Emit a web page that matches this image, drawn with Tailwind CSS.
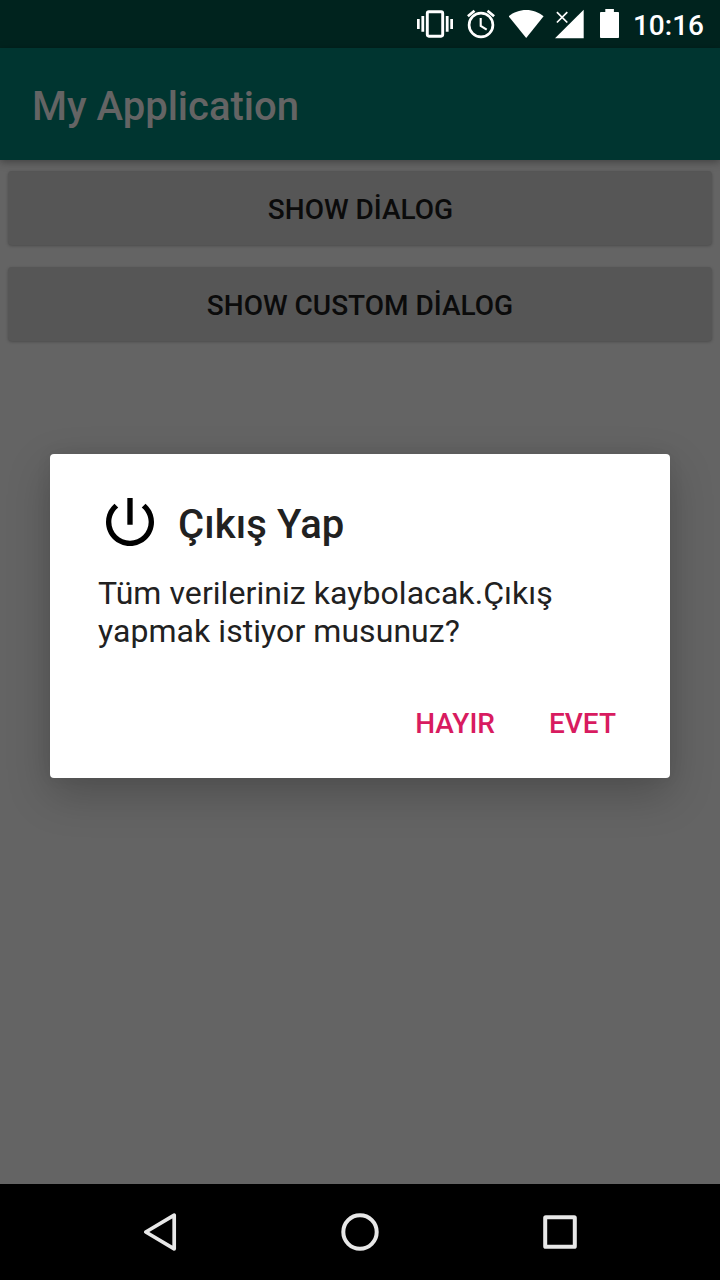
<!DOCTYPE html>
<html lang="tr">
<head>
<meta charset="utf-8">
<title>My Application</title>
<script src="https://cdn.jsdelivr.net/npm/@tailwindcss/browser@4"></script>
</head>
<body class="bg-[#646464]">
<div class="relative flex h-[1280px] w-[720px] flex-col overflow-hidden bg-[#646464] font-['Roboto',sans-serif]">
  <header class="flex h-12 shrink-0 items-start justify-end bg-[#00231e] pr-4 text-white">
    <svg class="mr-3.5 h-12 w-9" viewBox="417 0 36 48" fill="currentColor"><rect x="427.3" y="11.8" width="15.4" height="24.4" rx="1.6" fill="none" stroke="currentColor" stroke-width="2.9"/><path d="M417 19h2.7v10H417zM421.4 16h2.8v15.7h-2.8zM445.8 16h2.8v15.7h-2.8zM450.3 19h2.7v10h-2.7z"/></svg>
    <svg class="mr-3.5 h-12 w-7" viewBox="467 0 28 48" fill="none" stroke="currentColor" stroke-width="2.7"><circle cx="481" cy="25" r="11.9"/><path d="M467.9 16.3l6.6-5.5M494.1 16.3l-6.6-5.5"/><path d="M480.7 18v8l6 3.7" stroke-width="2.1"/></svg>
    <svg class="mr-[11px] h-12 w-[35px]" viewBox="509 0 35 48" fill="currentColor"><path d="M526.2 38L508.7 16.3C513 12.5 519.5 10 526.2 10s13.1 2.5 17.400 6.300z"/></svg>
    <svg class="mr-4 h-12 w-[29px]" viewBox="555 0 29 48" fill="currentColor"><path d="M555 38.300L583.700 9.700v28.600z"/><path d="M556.900 12.100l10.400 10.400M567.300 12.100l-10.400 10.400" stroke="currentColor" stroke-width="1.700"/></svg>
    <svg class="mr-3.5 h-12 w-[19px]" viewBox="600 0 19 48" fill="currentColor"><path d="M601 12h4.300V9h8.600v3h4.300q.8 0 .8.800v24.400q0 .8-.8.800H601q-1 0-1-.8V12.800q0-.8 1-.8z"/></svg>
    <span class="pt-[9px] text-[28px] leading-[33px] font-medium">10:16</span>
  </header>
  <div class="z-10 h-28 shrink-0 bg-[#003530] pt-[35px] pl-8 shadow-[0_2px_8px_rgba(0,0,0,0.35)]">
    <h1 class="text-[40px] leading-[47px] font-medium text-[#646464]">My Application</h1>
  </div>
  <main class="flex grow flex-col gap-[22px] px-2 pt-[11px]">
    <button class="h-[74px] shrink-0 rounded-[4px] bg-[#565656] pt-[2px] pl-px text-[28px] leading-[33px] font-medium text-[#0b0b0b] shadow-[0_1px_3px_rgba(0,0,0,0.25)]">SHOW DİALOG</button>
    <button class="h-[74px] shrink-0 rounded-[4px] bg-[#565656] pt-[2px] text-[28px] leading-[33px] font-medium text-[#0b0b0b] shadow-[0_1px_3px_rgba(0,0,0,0.25)]">SHOW CUSTOM DİALOG</button>
  </main>
  <nav class="flex h-24 shrink-0 items-center justify-center gap-[152px] bg-black">
    <svg class="h-12 w-12" viewBox="0 0 48 48" fill="none" stroke="#e8e8e8" stroke-width="3.7" stroke-linejoin="round"><path d="M38.200 7.200v33.600L9.800 24z"/></svg>
    <svg class="h-12 w-12" viewBox="0 0 48 48" fill="none" stroke="#e8e8e8" stroke-width="4"><circle cx="24" cy="24" r="16.700"/></svg>
    <svg class="h-12 w-12" viewBox="0 0 48 48" fill="none" stroke="#e8e8e8" stroke-width="4" stroke-linejoin="round"><rect x="9.200" y="9.200" width="29.600" height="29.600" rx=".6"/></svg>
  </nav>
  <section role="dialog" class="absolute top-[454px] left-[50px] z-20 flex h-[324px] w-[620px] flex-col rounded-[4px] bg-white px-12 text-[#212121] shadow-[0_16px_44px_rgba(0,0,0,0.22),0_0_16px_rgba(0,0,0,0.06)]">
    <div class="flex gap-4 pt-9">
      <svg class="h-16 w-16" viewBox="0 0 24 24" fill="#000"><path d="M13 3h-2v10h2V3zm4.830 2.170l-1.420 1.420C17.990 7.860 19 9.810 19 12c0 3.870-3.130 7-7 7s-7-3.130-7-7c0-2.190 1.010-4.140 2.580-5.420L6.170 5.170C4.230 6.820 3 9.260 3 12c0 4.970 4.030 9 9 9s9-4.030 9-9c0-2.740-1.230-5.180-3.170-6.830z"/></svg>
      <h2 class="pt-[11px] text-[40px] leading-[47px] font-medium tracking-[0.1px]">Çıkış Yap</h2>
    </div>
    <p class="pt-5 text-[32px] leading-[38px] tracking-[0.06px]">Tüm verileriniz kaybolacak.Çıkış<br>yapmak istiyor musunuz?</p>
    <div class="flex justify-end gap-[54px] pt-[57px] pr-1.5 text-[28px] leading-[33px] font-medium text-[#d81b60]">
      <button>HAYIR</button>
      <button>EVET</button>
    </div>
  </section>
</div>
</body>
</html>
